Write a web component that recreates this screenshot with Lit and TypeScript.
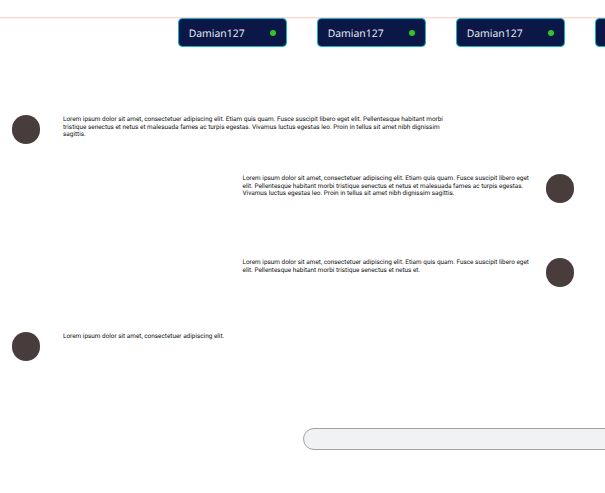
import { LitElement, html, css } from "lit";
import { customElement, property } from "lit/decorators.js";

@customElement("user-tab")
class UserTab extends LitElement {
  @property() name = "";
  static styles = css`
    :host {
      box-sizing: border-box;
      display: flex;
      flex: none;
      align-items: center;
      justify-content: space-between;
      width: 109px;
      height: 29px;
      padding: 0 10px 0 9.7px;
      border: 1px solid #12b2ca;
      border-radius: 4.5px;
      background: #0b1746;
      color: #e6e8f0;
      font: 10.4px/14px "Noto Sans", sans-serif;
      text-rendering: geometricPrecision;
    }
    .name {
      margin-top: 2px;
    }
    .dot {
      width: 6px;
      height: 6px;
      border-radius: 50%;
      background: #32c528;
    }
  `;
  render() {
    return html`<span class="name">${this.name}</span><span class="dot"></span>`;
  }
}

@customElement("chat-message")
class ChatMessage extends LitElement {
  @property() text = "";
  @property({ type: Boolean, reflect: true }) own = false;
  static styles = css`
    :host {
      display: flex;
      align-items: flex-start;
      gap: 22.5px;
      padding-left: 11.5px;
    }
    :host([own]) {
      flex-direction: row-reverse;
      justify-content: flex-end;
      gap: 0;
      padding-left: 242.5px;
    }
    .avatar {
      flex: none;
      width: 28.5px;
      height: 28.5px;
      border-radius: 50%;
      background: #483d3c;
    }
    .text {
      flex: none;
      width: 400px;
      margin: 1px 0 0 0.5px;
      color: #111;
      font: 6.415px/7.5px Roboto, sans-serif;
      text-rendering: geometricPrecision;
      white-space: pre;
    }
    :host([own]) .text {
      width: 303px;
      margin-left: 0;
    }
  `;
  render() {
    return html`<span class="avatar"></span>
      <p class="text">${this.text}</p>`;
  }
}

const users = ["Damian127", "Damian127", "Damian127", ""];

@customElement("app-root")
class AppRoot extends LitElement {
  static styles = css`
    :host {
      display: block;
      box-sizing: border-box;
      height: 493px;
      padding-top: 17px;
      overflow: hidden;
      background: #fff;
    }
    .tabs {
      box-sizing: border-box;
      display: flex;
      gap: 30px;
      height: 98px;
      padding: 1px 0 0 178px;
      background: linear-gradient(#fdd9d2, #fdd9d2) 0 0 / 100% 1px no-repeat,
        linear-gradient(#feeeea, #feeeea) 0 1px / 100% 1px no-repeat;
    }
    .messages {
      display: grid;
      grid-template-rows: 59px 84px 74px 96px;
    }
    .input {
      box-sizing: border-box;
      width: 340px;
      height: 22px;
      margin-left: 303px;
      border: 1px solid #a0a3a5;
      border-radius: 11px;
      background: #f0f2f4;
    }
  `;
  render() {
    return html`
      <nav class="tabs">
        ${users.map((name) => html`<user-tab .name=${name}></user-tab>`)}
      </nav>
      <main class="messages">
        <chat-message
          .text=${"Lorem ipsum dolor sit amet, consectetuer adipiscing elit. Etiam quis quam. Fusce suscipit libero eget elit. Pellentesque habitant morbi\ntristique senectus et netus et malesuada fames ac turpis egestas. Vivamus luctus egestas leo. Proin in tellus sit amet nibh dignissim\nsagittis."}
        ></chat-message>
        <chat-message
          own
          .text=${"Lorem ipsum dolor sit amet, consectetuer adipiscing elit. Etiam quis quam. Fusce suscipit libero eget\nelit. Pellentesque habitant morbi tristique senectus et netus et malesuada fames ac turpis egestas.\nVivamus luctus egestas leo. Proin in tellus sit amet nibh dignissim sagittis."}
        ></chat-message>
        <chat-message
          own
          .text=${"Lorem ipsum dolor sit amet, consectetuer adipiscing elit. Etiam quis quam. Fusce suscipit libero eget\nelit. Pellentesque habitant morbi tristique senectus et netus et."}
        ></chat-message>
        <chat-message
          .text=${"Lorem ipsum dolor sit amet, consectetuer adipiscing elit."}
        ></chat-message>
      </main>
      <div class="input"></div>
    `;
  }
}
